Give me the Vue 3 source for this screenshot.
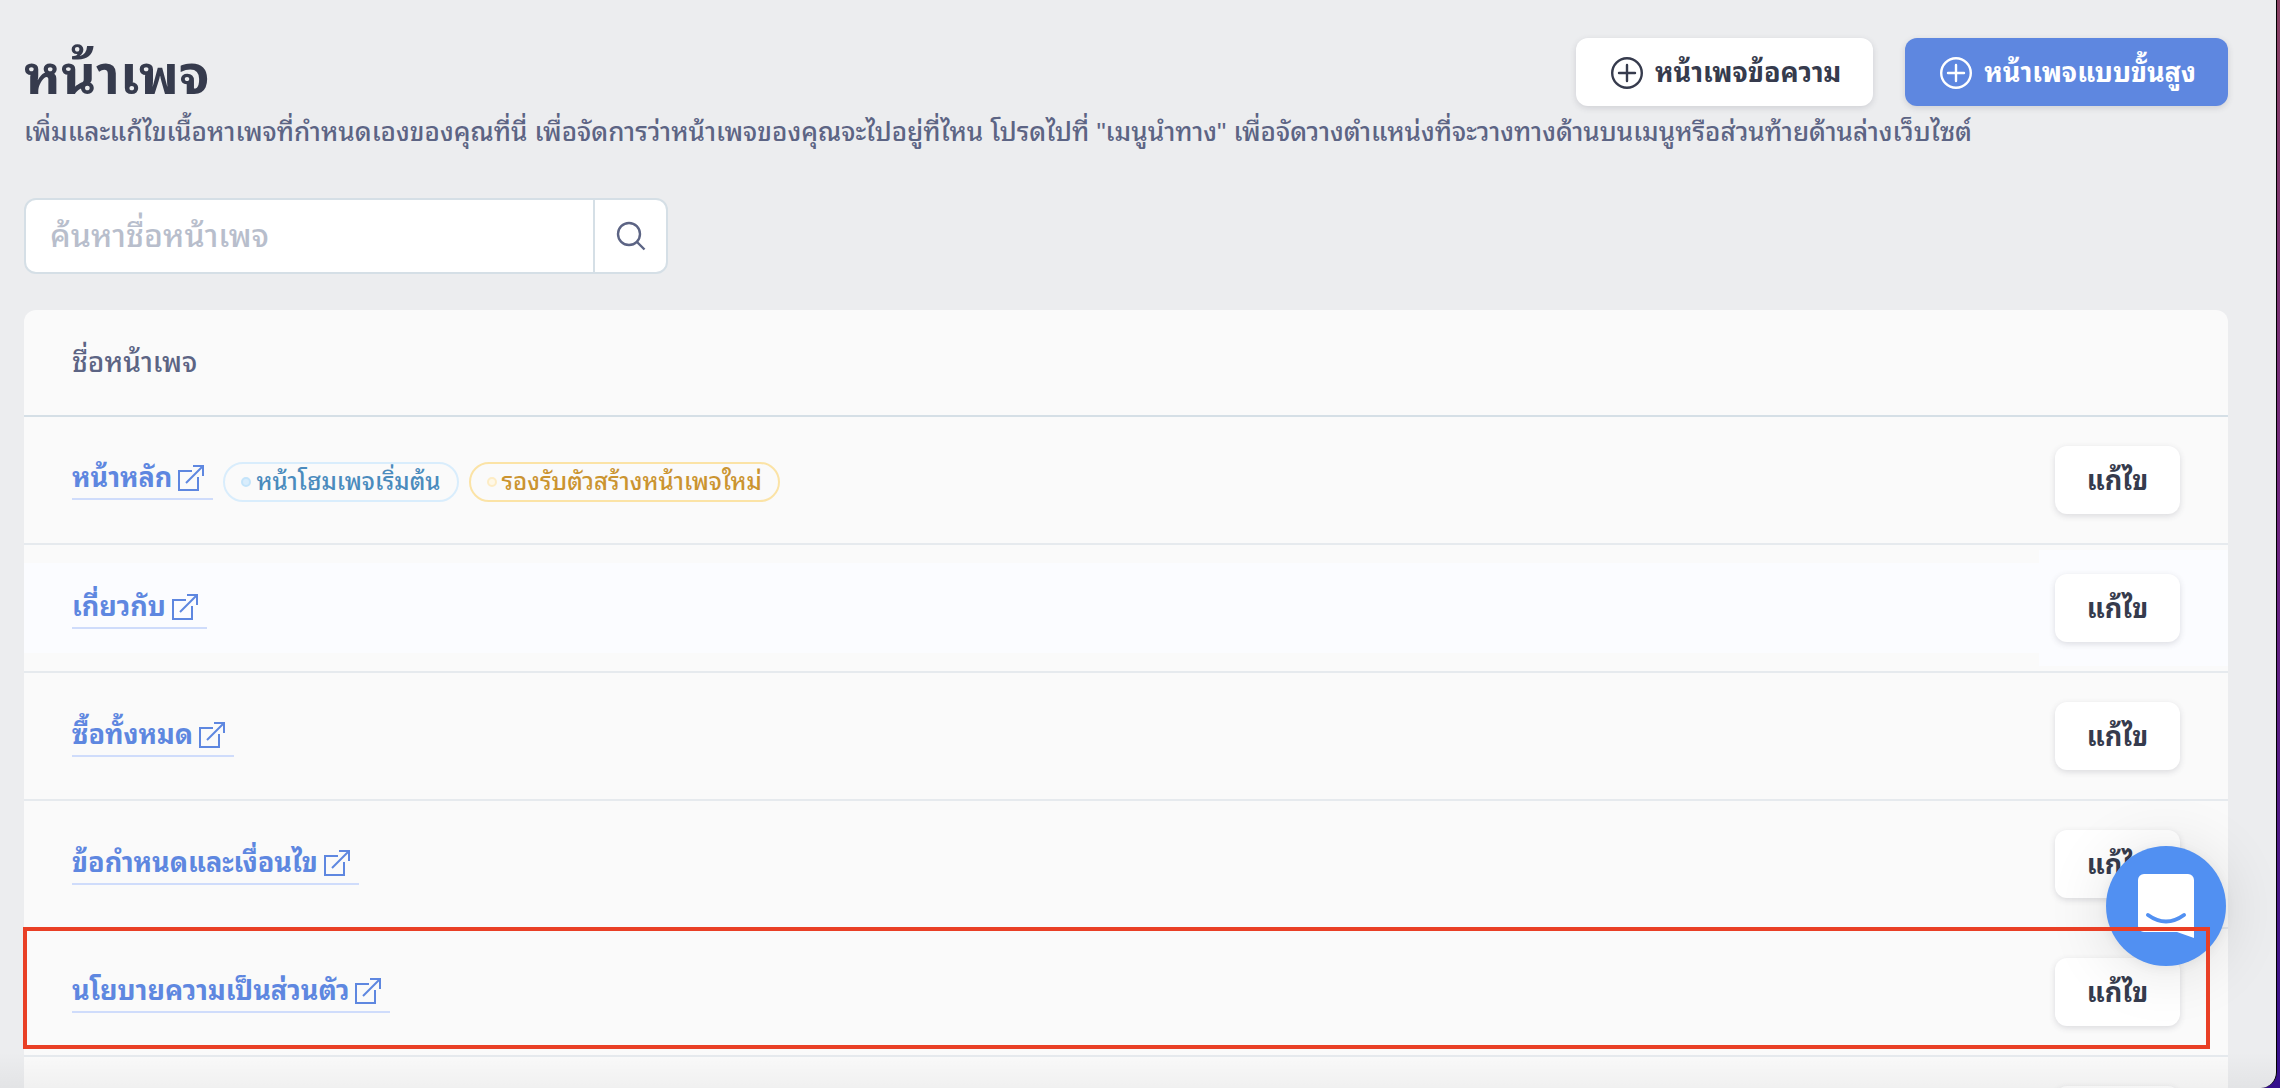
<script setup>
import { ref } from 'vue'

const query = ref('')
const pages = [
  {
    name: 'หน้าหลัก',
    tags: [
      { text: 'หน้าโฮมเพจเริ่มต้น', tone: 'info' },
      { text: 'รองรับตัวสร้างหน้าเพจใหม่', tone: 'warn' },
    ],
  },
  { name: 'เกี่ยวกับ', hovered: true },
  { name: 'ซื้อทั้งหมด' },
  { name: 'ข้อกำหนดและเงื่อนไข' },
  { name: 'นโยบายความเป็นส่วนตัว', marked: true },
  { name: '' },
]
</script>

<template>
  <div class="desktop">
    <main class="window">
      <header class="head">
        <div class="intro">
          <h1>หน้าเพจ</h1>
          <p>เพิ่มและแก้ไขเนื้อหาเพจที่กำหนดเองของคุณที่นี่ เพื่อจัดการว่าหน้าเพจของคุณจะไปอยู่ที่ไหน โปรดไปที่ "เมนูนำทาง" เพื่อจัดวางตำแหน่งที่จะวางทางด้านบนเมนูหรือส่วนท้ายด้านล่างเว็บไซต์</p>
        </div>
        <div class="actions">
          <button type="button" class="btn">
            <svg class="plus" viewBox="0 0 32 32"><circle cx="16" cy="16" r="14.8" /><path d="M16 8v16M8 16h16" /></svg>
            <span>หน้าเพจข้อความ</span>
          </button>
          <button type="button" class="btn primary">
            <svg class="plus" viewBox="0 0 32 32"><circle cx="16" cy="16" r="14.8" /><path d="M16 8v16M8 16h16" /></svg>
            <span>หน้าเพจแบบขั้นสูง</span>
          </button>
        </div>
      </header>

      <form class="search" @submit.prevent>
        <input v-model="query" type="search" placeholder="ค้นหาชื่อหน้าเพจ" aria-label="ค้นหาชื่อหน้าเพจ" />
        <button type="submit" aria-label="ค้นหา">
          <svg viewBox="0 0 30 30"><circle cx="13" cy="13" r="11" /><path d="M21 21l7.500 7.500" /></svg>
        </button>
      </form>

      <table class="list">
        <thead>
          <tr><th colspan="2" scope="col">ชื่อหน้าเพจ</th></tr>
        </thead>
        <tbody>
          <tr v-for="(page, i) in pages" :key="i" :class="{ hovered: page.hovered }">
            <td class="name">
              <div class="line">
                <a v-if="page.name" href="#">
                  <span>{{ page.name }}</span>
                  <svg viewBox="0 0 26 26"><path d="M14 6H1v19h19V12M8 18L24.500 1.500M15 1h10v10" /></svg>
                </a>
                <span v-for="tag in page.tags" :key="tag.text" class="tag" :class="tag.tone"><i></i>{{ tag.text }}</span>
              </div>
              <div v-if="page.marked" class="marker"></div>
            </td>
            <td class="edit"><button type="button" class="btn" aria-label="แก้ไข"><span v-if="page.name">แก้ไข</span></button></td>
          </tr>
        </tbody>
      </table>

      <button type="button" class="chat" aria-label="แชท">
        <svg viewBox="0 0 56 64">
          <path d="M6 0h44a6 6 0 0 1 6 6v58l-17-6H6a6 6 0 0 1-6-6V6a6 6 0 0 1 6-6z" fill="#fff" />
          <path d="M10 41q18 13 36 0" fill="none" stroke="#5190f2" stroke-width="4" stroke-linecap="round" />
        </svg>
      </button>
    </main>
  </div>
</template>

<style>
body {
  margin: 0;
}
</style>

<style scoped>
* {
  box-sizing: border-box;
}
.desktop {
  height: 100vh;
  padding-right: 3px;
  overflow: hidden;
  background: linear-gradient(#8a4062, #6e2480 50%, #35108c);
  font-family: "Liberation Sans", "Noto Sans Thai Looped", Loma, Garuda, "Noto Sans Thai", sans-serif;
  font-weight: 500;
  color: #363b4d;
}
.window {
  position: relative;
  height: 100%;
  padding: 38px 48px 0 24px;
  overflow: hidden;
  border-right: 1px solid #000;
  border-bottom-right-radius: 16px;
  background: #ecedef;
}
.window::after {
  content: "";
  position: absolute;
  inset: auto 0 0;
  height: 36px;
  background: linear-gradient(transparent, rgba(0, 0, 0, 0.04));
  pointer-events: none;
}
.head {
  display: flex;
  justify-content: space-between;
  align-items: flex-start;
}
.intro {
  flex: 1;
  width: 0;
  white-space: nowrap;
}
h1 {
  margin: 0;
  font-size: 54px;
  line-height: 74px;
}
p {
  margin: 0;
  font-size: 26px;
  line-height: 40px;
  color: #5c6484;
}
.actions {
  display: flex;
  gap: 32px;
}
.btn {
  display: flex;
  align-items: center;
  height: 68px;
  padding: 2px 32px 0;
  border: 0;
  border-radius: 12px;
  background: #fff;
  box-shadow: 0 2px 6px rgba(54, 59, 77, 0.16);
  font: bold 27px/40px "Liberation Sans", "Noto Sans Thai Looped", Loma, Garuda, "Noto Sans Thai", sans-serif;
  color: inherit;
  white-space: nowrap;
}
.actions .btn {
  gap: 12px;
  padding: 2px 32px 0 35px;
}
.primary {
  background: #5e87e0;
  color: #fff;
}
.plus {
  width: 32px;
  height: 32px;
  fill: none;
  stroke: currentColor;
  stroke-width: 2.400;
  stroke-linecap: round;
}
.search {
  display: flex;
  width: 644px;
  height: 76px;
  margin-top: 46px;
  overflow: hidden;
  border: 2px solid #d5dfe6;
  border-radius: 12px;
  background: #fff;
}
.search input {
  flex: 1;
  min-width: 0;
  padding: 0 24px;
  border: 0;
  background: none;
  font: 500 32px/48px "Liberation Sans", "Noto Sans Thai Looped", Loma, Garuda, "Noto Sans Thai", sans-serif;
  color: inherit;
}
.search input::placeholder {
  color: #b8becc;
}
.search button {
  display: grid;
  place-items: center;
  width: 73px;
  padding: 0;
  border: 0;
  border-left: 2px solid #d5dfe6;
  background: none;
}
.search svg {
  width: 30px;
  height: 30px;
  fill: none;
  stroke: #5c6484;
  stroke-width: 2.400;
}
.list {
  width: 100%;
  margin-top: 36px;
  border-spacing: 0;
  border-radius: 12px;
  background: #fafafa;
}
th {
  height: 107px;
  padding: 0 48px;
  border-bottom: 2px solid #d5dfe6;
  font-size: 28px;
  font-weight: 500;
  line-height: 40px;
  text-align: left;
  color: #5c6484;
}
tbody tr {
  position: relative;
}
td {
  height: 128px;
  padding: 0;
  border-bottom: 2px solid #e6eaee;
}
.name {
  padding-left: 48px;
}
.hovered .name {
  background: linear-gradient(#fbfcff, #fbfcff) center / 100% 90px no-repeat;
}
.hovered .edit {
  background: linear-gradient(#fbfcff, #fbfcff) center / 100% 116px no-repeat;
}
.edit {
  width: 189px;
  padding: 0 48px 0 16px;
}
.edit .btn {
  justify-content: center;
  width: 125px;
  padding: 2px 0 0;
}
.line {
  display: flex;
  align-items: baseline;
  gap: 10px;
}
a {
  display: flex;
  align-items: center;
  gap: 6px;
  padding-right: 9px;
  border-bottom: 2px solid #cfdcfb;
  font-size: 27px;
  font-weight: bold;
  line-height: 40px;
  text-decoration: none;
  color: #5e87e0;
}
a svg {
  width: 26px;
  height: 26px;
  fill: none;
  stroke: currentColor;
  stroke-width: 2;
}
.tag {
  display: flex;
  align-items: center;
  gap: 5px;
  height: 40px;
  padding: 0 16px;
  border: 2px solid;
  border-radius: 20px;
  font-size: 24px;
  line-height: 36px;
}
.tag i {
  width: 10px;
  height: 10px;
  border: 2px solid;
  border-radius: 50%;
}
.info {
  border-color: #d9edfc;
  color: #4a8bbd;
}
.info i {
  border-color: #c4e4fa;
  background: #d9edfc;
}
.warn {
  border-color: #fbe3a6;
  color: #cb9430;
}
.warn i {
  border-color: #fdecc4;
  background: #fff8e6;
}
.marker {
  position: absolute;
  z-index: 2;
  inset: -2px 18px 8px -1px;
  border: 4px solid #e93f25;
  pointer-events: none;
}
.chat {
  position: absolute;
  z-index: 1;
  right: 50px;
  bottom: 122px;
  display: grid;
  place-items: center;
  width: 120px;
  height: 120px;
  padding: 0;
  border: 0;
  border-radius: 50%;
  background: #5190f2;
  box-shadow: 0 2px 12px rgba(0, 0, 0, 0.06), 0 4px 64px rgba(0, 0, 0, 0.12);
}
.chat svg {
  width: 56px;
  height: 64px;
}
</style>
